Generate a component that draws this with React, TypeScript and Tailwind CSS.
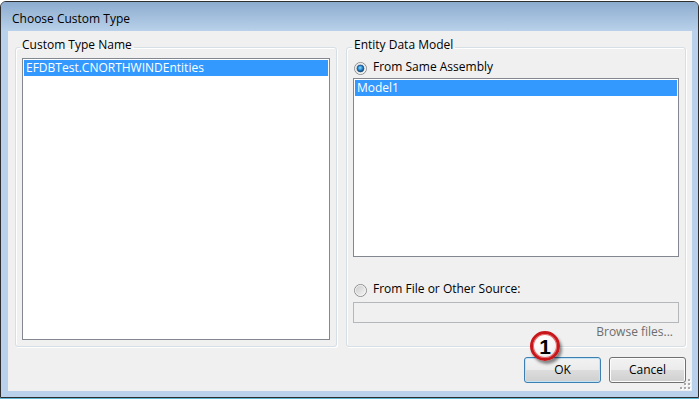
import React from 'react';

function Radio({ checked, id }: { checked?: boolean; id: string }) {
  return (
    <svg width="13" height="13" viewBox="0 0 13 13" className="mt-[3px] shrink-0">
      <defs>
        <linearGradient id={`${id}-bg`} x1="0" y1="0" x2="1" y2="1">
          <stop offset="0" stopColor="#cbcbcb" />
          <stop offset="1" stopColor="#f6f6f6" />
        </linearGradient>
        <radialGradient id={`${id}-dot`} cx="0.45" cy="0.4" r="0.6">
          <stop offset="0" stopColor="#8fe1ff" />
          <stop offset="0.5" stopColor="#2d8fd8" />
          <stop offset="1" stopColor="#0b3f74" />
        </radialGradient>
      </defs>
      <circle cx="6.5" cy="6.5" r="6" fill="#f4f4f4" stroke="#8c8e8f" />
      <circle cx="6.5" cy="6.5" r="5" fill={`url(#${id}-bg)`} stroke="#f2f2f2" strokeWidth="0.6" />
      {checked && <circle cx="6.5" cy="6.5" r="3.4" fill={`url(#${id}-dot)`} stroke="#1b4e7f" strokeWidth="0.7" />}
    </svg>
  );
}

function SizeGrip() {
  const dots: [number, number][] = [
    [8, 0],
    [4, 4],
    [8, 4],
    [0, 8],
    [4, 8],
    [8, 8],
  ];
  return (
    <svg width="11" height="11" viewBox="0 0 11 11" className="absolute right-[1px] bottom-[1px]">
      {dots.map(([x, y]) => (
        <g key={`${x}-${y}`}>
          <rect x={x + 1} y={y + 1} width="2" height="2" fill="#ffffff" />
          <rect x={x} y={y} width="2" height="2" fill="#a8a8a8" />
        </g>
      ))}
    </svg>
  );
}

function Button({ label, isDefault }: { label: string; isDefault?: boolean }) {
  return (
    <button
      className={
        isDefault
          ? 'w-[77px] h-[26px] rounded-[3px] border border-[#3c7fb1] shadow-[inset_0_0_0_1px_#c4e3f5] bg-[linear-gradient(#f2f2f2_0%,#ebebeb_50%,#dddddd_50%,#cfcfcf_100%)] text-black'
          : 'w-[77px] h-[26px] rounded-[3px] border border-[#707070] shadow-[inset_0_0_0_1px_#fcfcfc] bg-[linear-gradient(#f2f2f2_0%,#ebebeb_50%,#dddddd_50%,#cfcfcf_100%)] text-black'
      }
    >
      {label}
    </button>
  );
}

export default function App() {
  return (
    <div className="w-[699px] h-[399px] overflow-hidden bg-white font-['Open_Sans',sans-serif] text-[12px] leading-[16px] text-black">
      <div className="mt-px h-[397px] flex flex-col overflow-hidden rounded-t-[6px] border border-[#2e2e2e] bg-[#b9d1ea]">
        <div className="h-[29px] shrink-0 pl-[11px] pt-[9px] bg-[linear-gradient(#8caccf,#b9d1ea)]">
          Choose Custom Type
        </div>

        <div className="relative ml-[7px] h-[360px] w-[684px] shrink-0 bg-[#f0f0f0] pl-[7px] pr-[6px] pt-[6px]">
          <div className="flex gap-[9px]">
            <fieldset className="flex h-[310px] w-[322px] flex-col rounded-[3px] border border-[#d5dfe5] px-[6px] pb-[6px] pt-[1px] shadow-[inset_1px_1px_0_#ffffff,1px_1px_0_#ffffff]">
              <legend className="-ml-[2px] h-[20px] px-[2px] pb-[4px] leading-[16px]">Custom Type Name</legend>
              <div className="flex-1 border border-[#828790] bg-white p-px">
                <div className="h-[16px] bg-[#3399ff] px-[2px] text-white">EFDBTest.CNORTHWINDEntities</div>
              </div>
            </fieldset>

            <fieldset className="flex h-[310px] w-[340px] flex-col rounded-[3px] border border-[#d5dfe5] px-[6px] pb-[6px] pt-[2px] shadow-[inset_1px_1px_0_#ffffff,1px_1px_0_#ffffff]">
              <legend className="-ml-px h-[20px] px-[2px] pb-[4px] leading-[16px]">Entity Data Model</legend>
              <div className="ml-px flex h-[16px] items-start gap-[6px]">
                <Radio checked id="r1" />
                <span>From Same Assembly</span>
              </div>
              <div className="mt-[3px] h-[179px] border border-[#828790] bg-white p-px">
                <div className="h-[16px] bg-[#3399ff] px-[2px] text-white">Model1</div>
              </div>
              <div className="ml-px mt-[24px] flex h-[16px] items-start gap-[6px]">
                <Radio id="r2" />
                <span>From File or Other Source:</span>
              </div>
              <div className="mt-[5px] h-[21px] border border-[#b4b8bb] bg-[#f0f0f0]" />
              <div className="mt-px h-[16px] pr-[6px] text-right text-[#6d6d6d]">Browse files...</div>
            </fieldset>
          </div>

          <div className="mt-[10px] flex justify-end gap-[8px]">
            <Button label="OK" isDefault />
            <Button label="Cancel" />
          </div>

          <div className="absolute left-[522px] top-[300px] flex h-[30px] w-[30px] items-center justify-center rounded-full border-[3px] border-[#c8171b] bg-[radial-gradient(circle_at_40%_30%,#ffffff_0%,#f6f6f6_55%,#d9d9d9_100%)] shadow-[inset_0_0_0_1px_#e86a6a,2px_3px_3px_rgba(0,0,0,0.45)] font-['Liberation_Sans',sans-serif] text-[21px] font-bold leading-none text-black">
            1
          </div>

          <SizeGrip />
        </div>
      </div>
      <div className="h-px bg-[#5cb8d4]" />
    </div>
  );
}
